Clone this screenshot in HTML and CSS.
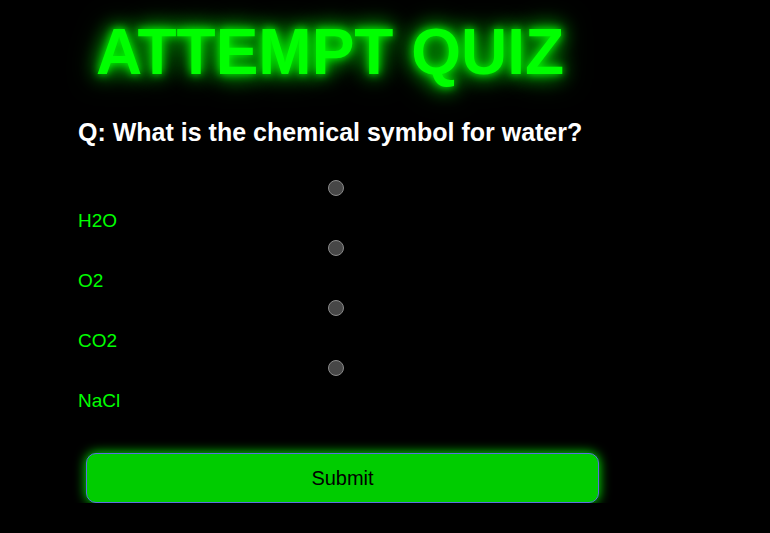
FILE: index.html
```html
<!DOCTYPE html>
<html lang="en">
<head>
<meta charset="utf-8">
<title>Attempt Quiz</title>
<link rel="stylesheet" href="styles.css">
</head>
<body>
<main class="quiz">
  <h1 class="quiz-title">ATTEMPT QUIZ</h1>
  <form class="quiz-form">
    <h2 class="question">Q: What is the chemical symbol for water?</h2>
    <div class="options">
      <label class="option"><input class="radio" type="radio" name="answer" value="H2O"><span class="option-text">H2O</span></label>
      <label class="option"><input class="radio" type="radio" name="answer" value="O2"><span class="option-text">O2</span></label>
      <label class="option"><input class="radio" type="radio" name="answer" value="CO2"><span class="option-text">CO2</span></label>
      <label class="option"><input class="radio" type="radio" name="answer" value="NaCl"><span class="option-text">NaCl</span></label>
    </div>
    <button class="submit" type="button">Submit</button>
  </form>
</main>
</body>
</html>
```
FILE: styles.css
```css
html, body {
  margin: 0;
  padding: 0;
  background: #000;
}
body {
  font-family: "Liberation Sans", Arial, sans-serif;
  color: #00ff00;
}
.quiz {
  width: 516px;
  padding: 20px 0 0 78px;
}
.quiz-title {
  margin: 0;
  padding-left: 18px;
  font-size: 64px;
  line-height: 64px;
  font-weight: bold;
  color: #00ff00;
  text-shadow: 0 0 8px #00ff00, 0 0 20px #00ff00, 0 0 30px rgba(0, 255, 0, 0.5);
}
.quiz-form {
  display: flex;
  flex-direction: column;
  padding-top: 36px;
}
.question {
  margin: 0 0 35px;
  font-size: 25px;
  line-height: 25px;
  font-weight: bold;
  color: #ffffff;
  white-space: nowrap;
}
.options {
  display: flex;
  flex-direction: column;
}
.option {
  display: flex;
  flex-direction: column;
  padding-bottom: 7px;
}
.radio {
  appearance: none;
  -webkit-appearance: none;
  align-self: center;
  width: 16px;
  height: 16px;
  margin: 0 0 13px;
  border: 1px solid #8a8a8a;
  border-radius: 50%;
  background: #474747;
  box-sizing: border-box;
}
.option-text {
  font-size: 19px;
  line-height: 24px;
  color: #00ff00;
}
.submit {
  margin: 33px 0 0 8px;
  width: 513px;
  height: 50px;
  padding: 0;
  box-sizing: border-box;
  background: #00cc00;
  border: 1px solid #5a6fe0;
  border-radius: 10px;
  color: #000;
  font-family: "Liberation Sans", Arial, sans-serif;
  font-size: 20px;
  box-shadow: 0 0 12px #00ff00;
}
```
